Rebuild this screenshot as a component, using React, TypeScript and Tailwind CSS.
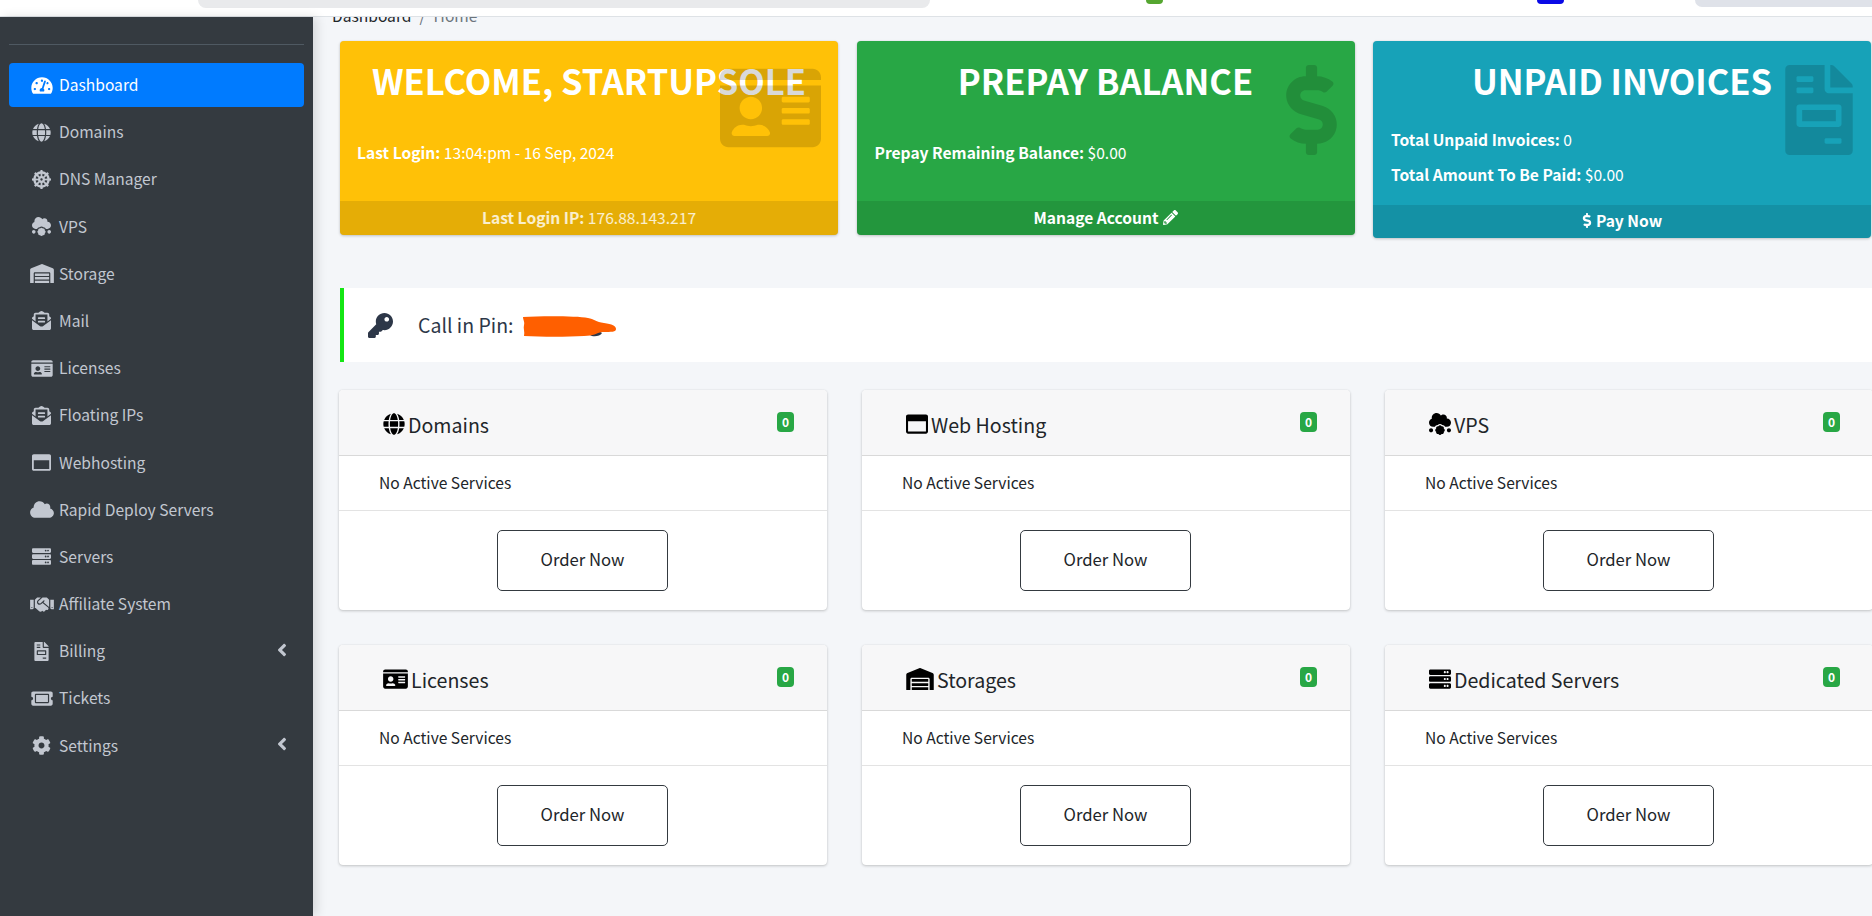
import React from 'react';
import {
  FaAngleLeft,
  FaCloud,
  FaCloudMeatball,
  FaCog,
  FaDharmachakra,
  FaDollarSign,
  FaEnvelopeOpenText,
  FaFileInvoice,
  FaGlobe,
  FaHandshake,
  FaIdCard,
  FaKey,
  FaPencilAlt,
  FaRegWindowMaximize,
  FaServer,
  FaTachometerAlt,
  FaTicketAlt,
  FaWarehouse,
} from 'react-icons/fa';

// Sidebar items; the icon classes carry each glyph's own aspect ratio
const menu = [
  { label: 'Dashboard', Icon: FaTachometerAlt, size: 'w-[22px] h-[19px]', active: true },
  { label: 'Domains', Icon: FaGlobe, size: 'w-[19px] h-[19px]' },
  { label: 'DNS Manager', Icon: FaDharmachakra, size: 'w-[19px] h-[19px]' },
  { label: 'VPS', Icon: FaCloudMeatball, size: 'w-[19px] h-[19px]' },
  { label: 'Storage', Icon: FaWarehouse, size: 'w-[24px] h-[19px]' },
  { label: 'Mail', Icon: FaEnvelopeOpenText, size: 'w-[19px] h-[19px]' },
  { label: 'Licenses', Icon: FaIdCard, size: 'w-[22px] h-[19px]' },
  { label: 'Floating IPs', Icon: FaEnvelopeOpenText, size: 'w-[19px] h-[19px]' },
  { label: 'Webhosting', Icon: FaRegWindowMaximize, size: 'w-[19px] h-[19px]' },
  { label: 'Rapid Deploy Servers', Icon: FaCloud, size: 'w-[24px] h-[19px]' },
  { label: 'Servers', Icon: FaServer, size: 'w-[19px] h-[19px]' },
  { label: 'Affiliate System', Icon: FaHandshake, size: 'w-[24px] h-[19px]' },
  { label: 'Billing', Icon: FaFileInvoice, size: 'w-[15px] h-[19px]', caret: true },
  { label: 'Tickets', Icon: FaTicketAlt, size: 'w-[22px] h-[19px]' },
  { label: 'Settings', Icon: FaCog, size: 'w-[19px] h-[19px]', caret: true },
];

const services = [
  { title: 'Domains', Icon: FaGlobe, size: 'w-[22px] h-[22px]' },
  { title: 'Web Hosting', Icon: FaRegWindowMaximize, size: 'w-[22px] h-[22px]' },
  { title: 'VPS', Icon: FaCloudMeatball, size: 'w-[22px] h-[22px]' },
  { title: 'Licenses', Icon: FaIdCard, size: 'w-[25px] h-[22px]' },
  { title: 'Storages', Icon: FaWarehouse, size: 'w-[28px] h-[22px]' },
  { title: 'Dedicated Servers', Icon: FaServer, size: 'w-[22px] h-[22px]' },
];

const TopBar: React.FC = () => (
  <div className="h-[17px] shrink-0 bg-white border-b border-[#dee2e6] flex items-start">
    <div className="ml-[198px] w-[732px] h-[8px] bg-[#e9eaec] rounded-b-[14px]" />
    <div className="ml-[216px] w-[17px] h-[4px] bg-[#55a630] rounded-b-[5px]" />
    <div className="ml-[374px] w-[27px] h-[4px] bg-[#0a0ae6] rounded-b-[5px]" />
    <div className="ml-[131px] flex-1 h-[7px] bg-[#dfe2e9] rounded-bl-[14px]" />
  </div>
);

const Sidebar: React.FC = () => (
  <aside className="w-[313px] shrink-0 bg-[#343a40] shadow-[4px_0_10px_rgba(0,0,0,0.12)] z-10 px-[9px]">
    <div className="mt-[27px] mb-[18px] border-t border-[#4f5962]" />
    <nav>
      {menu.map(({ label, Icon, size, active, caret }) => (
        <a
          key={label}
          className={`flex items-center h-[44px] mb-[3.2px] pl-[16px] pr-[16px] rounded-[4px] ${
            active ? 'bg-[#007bff] text-white' : 'text-[#c2c7d0]'
          }`}
        >
          <span className="w-[34px] pr-[1px] flex justify-center">
            <Icon className={size} />
          </span>
          <span className="flex-1 text-[15.6px] leading-6 pb-[2px]">{label}</span>
          {caret && <FaAngleLeft className="w-[12px] h-[20px] mb-[3px]" />}
        </a>
      ))}
    </nav>
  </aside>
);

const SmallBox: React.FC<{
  title: string;
  bg: string;
  icon: React.ReactNode;
  bodyClass: string;
  footerClass: string;
  children: React.ReactNode;
  footer: React.ReactNode;
}> = ({ title, bg, icon, bodyClass, footerClass, children, footer }) => (
  <div className={`relative rounded-[4px] overflow-hidden text-white shadow-[0_0_1px_rgba(0,0,0,0.13),0_1px_3px_rgba(0,0,0,0.2)] ${bg}`}>
    <div className={`px-[18px] ${bodyClass}`}>
      <h3 className="pt-[15px] text-center text-[34.5px] leading-[48px] font-bold whitespace-nowrap">{title}</h3>
      {children}
    </div>
    <div className={`flex items-center justify-center gap-[4px] bg-black/10 text-[15.6px] ${footerClass}`}>{footer}</div>
    {icon}
  </div>
);

const ServiceCard: React.FC<(typeof services)[number]> = ({ title, Icon, size }) => (
  <div className="bg-white rounded-[4px] h-[220px] flex flex-col shadow-[0_0_1px_rgba(0,0,0,0.13),0_1px_3px_rgba(0,0,0,0.2)]">
    <div className="h-[66px] shrink-0 bg-[#f7f7f8] rounded-t-[4px] border-b border-[#d9d9d9] relative flex items-center pl-[44px] pb-[6px] pt-[8px] text-black">
      <Icon className={`${size} shrink-0 mr-[3px]`} />
      <h3 className="text-[19.6px] leading-7 mt-[3px] text-[#212529]">{title}</h3>
      <span className="absolute left-[438px] top-[22px] w-[17px] h-[20px] rounded-[4px] bg-[#28a745] text-white text-[12px] leading-[20px] font-bold text-center">
        0
      </span>
    </div>
    <div className="h-[55px] shrink-0 border-b border-[#e3e3e3] flex items-center pl-[40px] pb-[1px] text-[15.6px] text-[#212529]">
      No Active Services
    </div>
    <div className="flex-1 flex justify-center pt-[19px] pr-[2px]">
      <button className="w-[171px] h-[61px] pb-[2px] pl-[1px] border border-[#343a40] rounded-[5px] text-[16.7px] text-[#212529]">
        Order Now
      </button>
    </div>
  </div>
);

const App: React.FC = () => (
  <div className="h-screen w-screen overflow-hidden flex flex-col bg-[#f4f6f9] font-['Noto_Sans_CJK_SC',sans-serif] text-[#212529]">
    <TopBar />
    <div className="flex-1 flex min-h-0">
      <Sidebar />
      <main className="flex-1 min-w-0 overflow-hidden">
        {/* Breadcrumb is cut off by the header in the screenshot */}
        <div className="-mt-[14px] ml-[19px] h-[24px] flex gap-[8px] text-[15.6px] leading-6">
          <span>Dashboard</span>
          <span className="text-[#6c757d]">/</span>
          <span className="text-[#6c757d]">Home</span>
        </div>
        <div className="mt-[14px] ml-[27px] grid grid-cols-[498px_498px_498px] gap-x-[18.5px] items-start">
          <SmallBox
            title="WELCOME, STARTUPSOLE"
            bg="bg-[#ffc107]"
            bodyClass="h-[160px]"
            footerClass="h-[34px] pb-[1px] text-white/80"
            icon={<FaIdCard className="absolute right-[17px] top-[22px] w-[101px] h-[90px] text-black/15" />}
            footer={<span><b>Last Login IP:</b> 176.88.143.217</span>}
          >
            <p className="mt-[36px] -ml-px text-[15.6px] leading-6"><b>Last Login:</b> 13:04:pm - 16 Sep, 2024</p>
          </SmallBox>
          <SmallBox
            title="PREPAY BALANCE"
            bg="bg-[#28a745]"
            bodyClass="h-[160px]"
            footerClass="h-[34px] pb-[1px] font-bold"
            icon={<FaDollarSign className="absolute right-[18px] top-[24px] w-[51px] h-[90px] text-black/15" />}
            footer={<><span>Manage Account</span><FaPencilAlt className="w-[15px] h-[15px]" /></>}
          >
            <p className="mt-[36px] text-[15.6px] leading-6"><b>Prepay Remaining Balance:</b> $0.00</p>
          </SmallBox>
          <SmallBox
            title="UNPAID INVOICES"
            bg="bg-[#17a2b8]"
            bodyClass="h-[164px]"
            footerClass="h-[33px] pb-[2px] font-bold"
            icon={<FaFileInvoice className="absolute right-[18px] top-[24px] w-[68px] h-[90px] text-black/15" />}
            footer={<><FaDollarSign className="w-[10px] h-[15px]" /><span>Pay Now</span></>}
          >
            <p className="mt-[23px] text-[15.6px] leading-6"><b>Total Unpaid Invoices:</b> 0</p>
            <p className="mt-[11px] text-[15.6px] leading-6"><b>Total Amount To Be Paid:</b> $0.00</p>
          </SmallBox>
        </div>

        <div className="mt-[50px] ml-[27px] h-[74px] bg-white border-l-4 border-[#14e614] flex items-center pl-[24px] text-[#2d3748]">
          <FaKey className="w-[25px] h-[25px] mr-[25px]" />
          <span className="text-[19.5px] leading-7">Call in Pin:</span>
          {/* Hand-drawn redaction over the pin */}
          <svg viewBox="0 0 94 21" className="ml-[8px] w-[94px] h-[21px] mt-[3px]">
            <path d="M68 16 C72 15 78 15 80 17 C78 21 70 21 68 19 Z" fill="#2d3748" />
            <path
              d="M1 1 C20 0 55 0 66 2 C72 3 74 6 82 7 C90 8 94 10 94 13 C94 16 90 16 80 16 C74 17 72 20 62 20 C45 21 20 21 2 20 C3 16 1 12 2 9 C3 6 1 4 1 1 Z"
              fill="#ff5f00"
            />
          </svg>
        </div>

        <div className="mt-[28px] ml-[26px] grid grid-cols-[488px_488px_488px] gap-[35px]">
          {services.map((s) => (
            <ServiceCard key={s.title} {...s} />
          ))}
        </div>
      </main>
    </div>
  </div>
);

export default App;
